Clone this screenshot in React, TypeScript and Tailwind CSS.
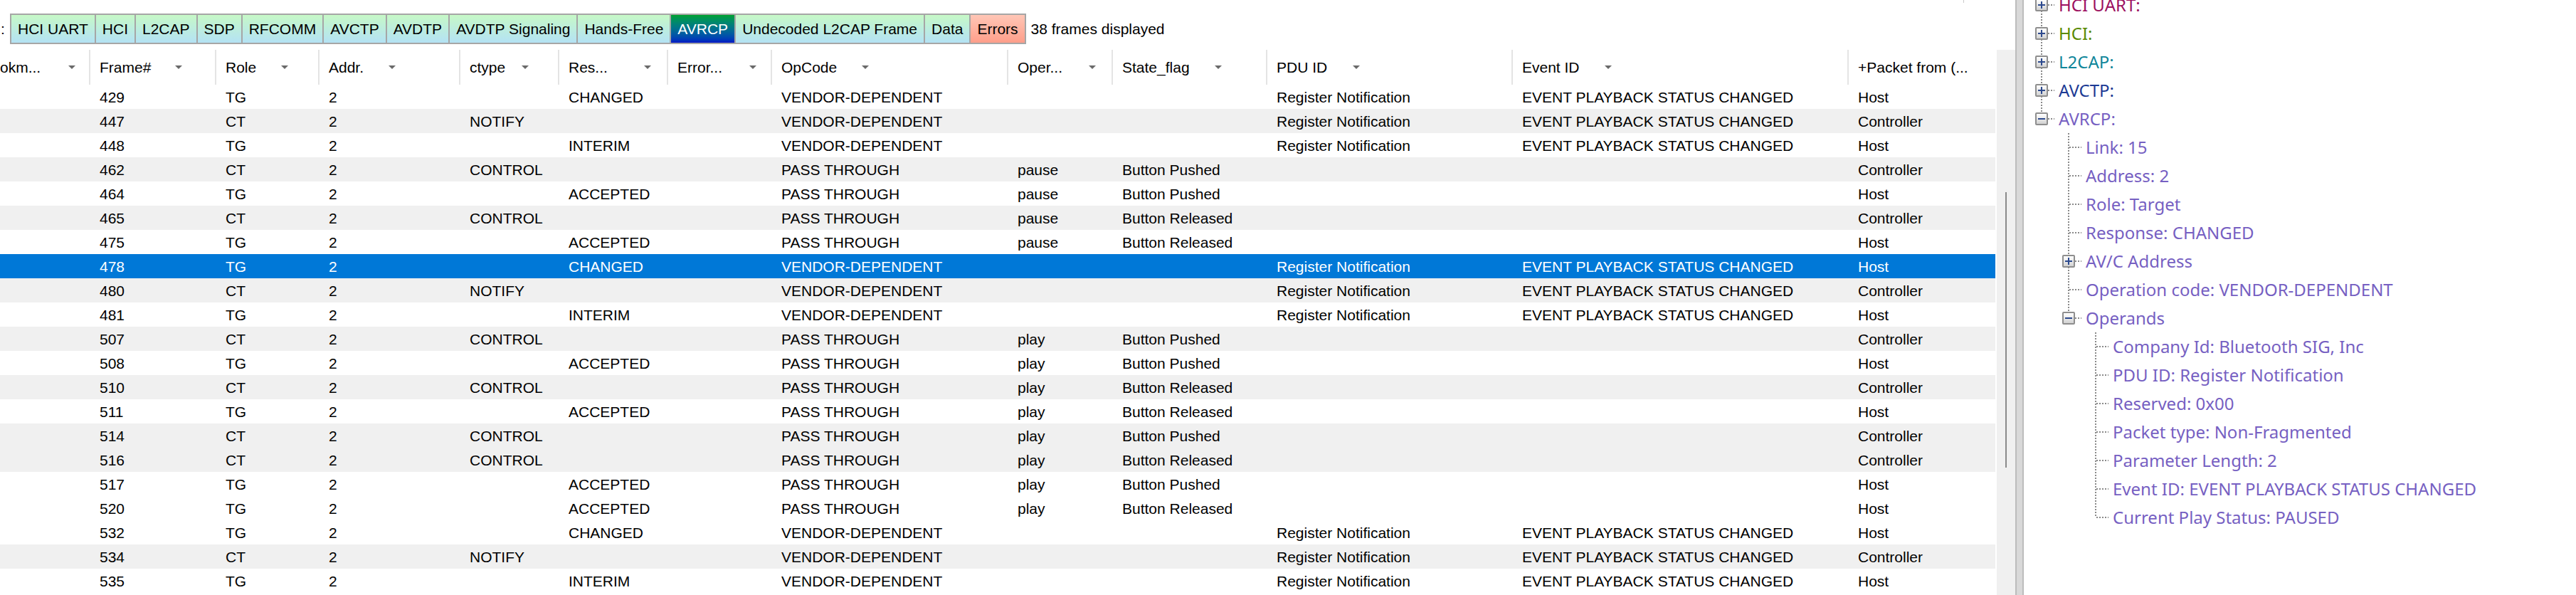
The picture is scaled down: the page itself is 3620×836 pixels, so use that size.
import React from "react";

const VD = "VENDOR-DEPENDENT";
const PT = "PASS THROUGH";
const RN = "Register Notification";
const EV = "EVENT PLAYBACK STATUS CHANGED";

type Row = {
  f: string;
  role: "TG" | "CT";
  ctype: string;
  res: string;
  op: string;
  oper: string;
  state: string;
  pdu: string;
  ev: string;
  from: string;
  sel?: boolean;
};

const rows: Row[] = [
  { f: "429", role: "TG", ctype: "", res: "CHANGED", op: VD, oper: "", state: "", pdu: RN, ev: EV, from: "Host" },
  { f: "447", role: "CT", ctype: "NOTIFY", res: "", op: VD, oper: "", state: "", pdu: RN, ev: EV, from: "Controller" },
  { f: "448", role: "TG", ctype: "", res: "INTERIM", op: VD, oper: "", state: "", pdu: RN, ev: EV, from: "Host" },
  { f: "462", role: "CT", ctype: "CONTROL", res: "", op: PT, oper: "pause", state: "Button Pushed", pdu: "", ev: "", from: "Controller" },
  { f: "464", role: "TG", ctype: "", res: "ACCEPTED", op: PT, oper: "pause", state: "Button Pushed", pdu: "", ev: "", from: "Host" },
  { f: "465", role: "CT", ctype: "CONTROL", res: "", op: PT, oper: "pause", state: "Button Released", pdu: "", ev: "", from: "Controller" },
  { f: "475", role: "TG", ctype: "", res: "ACCEPTED", op: PT, oper: "pause", state: "Button Released", pdu: "", ev: "", from: "Host" },
  { f: "478", role: "TG", ctype: "", res: "CHANGED", op: VD, oper: "", state: "", pdu: RN, ev: EV, from: "Host", sel: true },
  { f: "480", role: "CT", ctype: "NOTIFY", res: "", op: VD, oper: "", state: "", pdu: RN, ev: EV, from: "Controller" },
  { f: "481", role: "TG", ctype: "", res: "INTERIM", op: VD, oper: "", state: "", pdu: RN, ev: EV, from: "Host" },
  { f: "507", role: "CT", ctype: "CONTROL", res: "", op: PT, oper: "play", state: "Button Pushed", pdu: "", ev: "", from: "Controller" },
  { f: "508", role: "TG", ctype: "", res: "ACCEPTED", op: PT, oper: "play", state: "Button Pushed", pdu: "", ev: "", from: "Host" },
  { f: "510", role: "CT", ctype: "CONTROL", res: "", op: PT, oper: "play", state: "Button Released", pdu: "", ev: "", from: "Controller" },
  { f: "511", role: "TG", ctype: "", res: "ACCEPTED", op: PT, oper: "play", state: "Button Released", pdu: "", ev: "", from: "Host" },
  { f: "514", role: "CT", ctype: "CONTROL", res: "", op: PT, oper: "play", state: "Button Pushed", pdu: "", ev: "", from: "Controller" },
  { f: "516", role: "CT", ctype: "CONTROL", res: "", op: PT, oper: "play", state: "Button Released", pdu: "", ev: "", from: "Controller" },
  { f: "517", role: "TG", ctype: "", res: "ACCEPTED", op: PT, oper: "play", state: "Button Pushed", pdu: "", ev: "", from: "Host" },
  { f: "520", role: "TG", ctype: "", res: "ACCEPTED", op: PT, oper: "play", state: "Button Released", pdu: "", ev: "", from: "Host" },
  { f: "532", role: "TG", ctype: "", res: "CHANGED", op: VD, oper: "", state: "", pdu: RN, ev: EV, from: "Host" },
  { f: "534", role: "CT", ctype: "NOTIFY", res: "", op: VD, oper: "", state: "", pdu: RN, ev: EV, from: "Controller" },
  { f: "535", role: "TG", ctype: "", res: "INTERIM", op: VD, oper: "", state: "", pdu: RN, ev: EV, from: "Host" },
];

type Col = { label: string; lw: string; arrow: boolean; pl: string };

const cols: Col[] = [
  { label: "okm...", lw: "w-[96px]", arrow: true, pl: "pl-0" },
  { label: "Frame#", lw: "w-[106px]", arrow: true, pl: "pl-[13px]" },
  { label: "Role", lw: "w-[78px]", arrow: true, pl: "pl-[13px]" },
  { label: "Addr.", lw: "w-[84px]", arrow: true, pl: "pl-[13px]" },
  { label: "ctype", lw: "w-[73px]", arrow: true, pl: "pl-[13px]" },
  { label: "Res...", lw: "w-[106px]", arrow: true, pl: "pl-[13px]" },
  { label: "Error...", lw: "w-[101px]", arrow: true, pl: "pl-[13px]" },
  { label: "OpCode", lw: "w-[113px]", arrow: true, pl: "pl-[13px]" },
  { label: "Oper...", lw: "w-[100px]", arrow: true, pl: "pl-[13px]" },
  { label: "State_flag", lw: "w-[130px]", arrow: true, pl: "pl-[13px]" },
  { label: "PDU ID", lw: "w-[107px]", arrow: true, pl: "pl-[13px]" },
  { label: "Event ID", lw: "w-[116px]", arrow: true, pl: "pl-[13px]" },
  { label: "+Packet from (...", lw: "w-auto", arrow: false, pl: "pl-[13px]" },
];

const GRID =
  "grid grid-cols-[127px_177px_145px_198px_139px_153px_146px_332px_147px_217px_345px_472px_206px]";

type Tab = { name: string; kind: "n" | "sel" | "err" };
const tabs: Tab[] = [
  { name: "HCI UART", kind: "n" },
  { name: "HCI", kind: "n" },
  { name: "L2CAP", kind: "n" },
  { name: "SDP", kind: "n" },
  { name: "RFCOMM", kind: "n" },
  { name: "AVCTP", kind: "n" },
  { name: "AVDTP", kind: "n" },
  { name: "AVDTP Signaling", kind: "n" },
  { name: "Hands-Free", kind: "n" },
  { name: "AVRCP", kind: "sel" },
  { name: "Undecoded L2CAP Frame", kind: "n" },
  { name: "Data", kind: "n" },
  { name: "Errors", kind: "err" },
];

type G = "full" | "half" | "none";
type TNode = { t: string; g: G[]; exp?: "+" | "-"; c: string };
const P = "text-[#7660c2]";
const tree: TNode[] = [
  { t: "HCI UART:", g: ["full"], exp: "+", c: "text-[#9c1060]" },
  { t: "HCI:", g: ["full"], exp: "+", c: "text-[#5a8a00]" },
  { t: "L2CAP:", g: ["full"], exp: "+", c: "text-[#10869a]" },
  { t: "AVCTP:", g: ["full"], exp: "+", c: "text-[#1c3a94]" },
  { t: "AVRCP:", g: ["half"], exp: "-", c: P },
  { t: "Link: 15", g: ["none", "full"], c: P },
  { t: "Address: 2", g: ["none", "full"], c: P },
  { t: "Role: Target", g: ["none", "full"], c: P },
  { t: "Response: CHANGED", g: ["none", "full"], c: P },
  { t: "AV/C Address", g: ["none", "full"], exp: "+", c: P },
  { t: "Operation code: VENDOR-DEPENDENT", g: ["none", "full"], c: P },
  { t: "Operands", g: ["none", "half"], exp: "-", c: P },
  { t: "Company Id: Bluetooth SIG, Inc", g: ["none", "none", "full"], c: P },
  { t: "PDU ID: Register Notification", g: ["none", "none", "full"], c: P },
  { t: "Reserved: 0x00", g: ["none", "none", "full"], c: P },
  { t: "Packet type: Non-Fragmented", g: ["none", "none", "full"], c: P },
  { t: "Parameter Length: 2", g: ["none", "none", "full"], c: P },
  { t: "Event ID: EVENT PLAYBACK STATUS CHANGED", g: ["none", "none", "full"], c: P },
  { t: "Current Play Status: PAUSED", g: ["none", "none", "half"], c: P },
];

const VDOT =
  "bg-[repeating-linear-gradient(to_bottom,#8a8a8a_0px,#8a8a8a_2px,transparent_2px,transparent_4px)]";
const HDOT =
  "bg-[repeating-linear-gradient(to_right,#8a8a8a_0px,#8a8a8a_2px,transparent_2px,transparent_4px)]";

function Arrow() {
  return (
    <svg width="10" height="6" viewBox="0 0 10 6" className="shrink-0">
      <path d="M0 0 L10 0 L5 5 Z" fill="#6a6a6a" />
    </svg>
  );
}

function Expander({ sign }: { sign: "+" | "-" }) {
  return (
    <div className="absolute left-[10px] top-[11px] w-[18px] h-[18px] border-2 border-[#8e8e8e] rounded-[2px] bg-linear-to-b from-white to-[#d2d2d2] flex items-center justify-center">
      <div className="relative w-[10px] h-[10px] flex items-center justify-center">
        <div className="w-[10px] h-[2px] bg-[#2d4a8e]" />
        {sign === "+" && <div className="absolute left-[4px] top-0 w-[2px] h-[10px] bg-[#2d4a8e]" />}
      </div>
    </div>
  );
}

function TreeRow({ n }: { n: TNode }) {
  const own = n.g.length - 1;
  return (
    <div className="flex items-center h-[40px]">
      {n.g.map((g, i) => (
        <div key={i} className="relative w-[38px] h-[40px] shrink-0">
          {g === "full" && <div className={`absolute left-[18px] top-0 h-[40px] w-[2px] ${VDOT}`} />}
          {g === "half" && <div className={`absolute left-[18px] top-0 h-[20px] w-[2px] ${VDOT}`} />}
          {i === own && <div className={`absolute left-[20px] top-[19px] w-[17px] h-[2px] ${HDOT}`} />}
          {i === own && n.exp && <Expander sign={n.exp} />}
        </div>
      ))}
      <span className={`ml-[5px] whitespace-nowrap leading-none ${n.c}`}>{n.t}</span>
    </div>
  );
}

export default function App() {
  return (
    <div className="w-[3620px] h-[836px] flex overflow-hidden bg-white text-black">
      {/* left pane */}
      <div className="relative w-[2832px] h-full flex flex-col font-['Liberation_Sans',Arial,sans-serif] text-[21px]">
        <div className="absolute left-[2759px] top-0 w-[1px] h-[4px] bg-[#c8c8c8]" />
        <div className="h-[70px] pt-[19px] flex items-start shrink-0">
          <span className="w-[14px] h-[43px] flex items-center leading-none pl-[1px]">:</span>
          <div className="flex h-[43px] border-2 border-[#a6a6a6] divide-x-2 divide-[#a6a6a6]">
            {tabs.map((t) => (
              <div
                key={t.name}
                className={
                  "px-[9px] flex items-center leading-none whitespace-nowrap bg-linear-to-b " +
                  (t.kind === "sel"
                    ? "from-[#00a02c] to-[#0012c4] text-white"
                    : t.kind === "err"
                    ? "from-[#ffc6b6] to-[#ff9e8a]"
                    : "from-[#c6f8c6] to-[#b4e2f4]")
                }
              >
                {t.name}
              </div>
            ))}
          </div>
          <span className="ml-[7px] h-[43px] flex items-center leading-none whitespace-nowrap">38 frames displayed</span>
        </div>
        <div className="flex flex-1 min-h-0">
          <div className="w-[2804px] flex flex-col">
            <div className={`${GRID} h-[49px] shrink-0`}>
              {cols.map((c, i) => (
                <div
                  key={i}
                  className={`flex items-center ${c.pl} border-r-2 ${i === cols.length - 1 ? "border-transparent" : "border-[#e4e4e4]"} overflow-hidden whitespace-nowrap leading-none`}
                >
                  <span className={`${c.lw} shrink-0`}>{c.label}</span>
                  {c.arrow && <Arrow />}
                </div>
              ))}
            </div>
            {rows.map((r) => {
              const cells = ["", r.f, r.role, "2", r.ctype, r.res, "", r.op, r.oper, r.state, r.pdu, r.ev, r.from];
              const bg = r.sel ? "bg-[#0078d7] text-white" : r.role === "CT" ? "bg-[#f0f0f0]" : "bg-white";
              return (
                <div key={r.f} className={`${GRID} h-[34px] shrink-0 ${bg}`}>
                  {cells.map((v, i) => (
                    <div
                      key={i}
                      className={`flex items-center ${i === 0 ? "pl-0" : "pl-[13px]"} overflow-hidden whitespace-nowrap leading-none`}
                    >
                      {v}
                    </div>
                  ))}
                </div>
              );
            })}
          </div>
          <div className="ml-[2px] w-[26px] bg-[#f0f0f0] flex flex-col pt-[200px]">
            <div className="ml-[12px] w-[2px] h-[387px] bg-[#8a8a8a]" />
          </div>
        </div>
      </div>
      {/* splitter */}
      <div className="w-[12px] h-full border-l-2 border-r-2 border-[#bcbcbc] bg-[#d9d9d9] shrink-0" />
      {/* tree pane */}
      <div className="flex-1 h-full overflow-hidden bg-white pl-[6px] font-['Noto_Sans',sans-serif] text-[24px]">
        <div className="mt-[-13px] flex flex-col">
          {tree.map((n, i) => (
            <TreeRow key={i} n={n} />
          ))}
        </div>
      </div>
    </div>
  );
}
